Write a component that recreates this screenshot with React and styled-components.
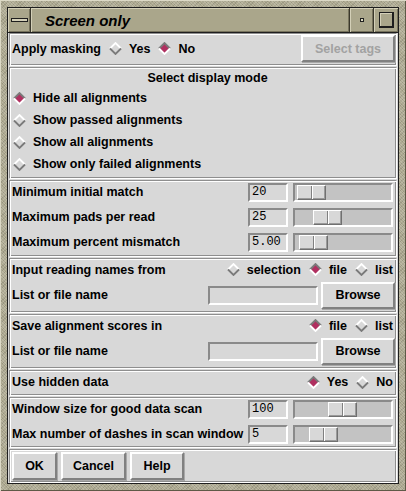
import React from 'react';
import styled, { createGlobalStyle } from 'styled-components';

const GlobalStyle = createGlobalStyle`
  html, body {
    margin: 0;
    padding: 0;
    background: #aba78e;
  }
  body {
    font-family: "Liberation Sans", Arial, sans-serif;
  }
`;

const Frame = styled.div`
  width: 406px;
  height: 491px;
  box-sizing: border-box;
  padding: 7px;
  display: flex;
  background-color: #aca88f;
  background-image: repeating-linear-gradient(45deg, rgba(255,255,255,0.18) 0 1px, transparent 1px 2px),
    repeating-linear-gradient(-45deg, rgba(0,0,0,0.10) 0 1px, transparent 1px 3px);
  box-shadow: inset 1px 1px 0 #dcd9c6, inset -1px -1px 0 #5e5a47;
`;

const Window = styled.div`
  flex: 1;
  display: flex;
  flex-direction: column;
  border: 1px solid #1e1e1e;
  background: #d8d8d8;
`;

const TitleBar = styled.div`
  height: 24px;
  flex: 0 0 auto;
  display: flex;
  border-bottom: 1px solid #1e1e1e;
  background: #aaa68b;
`;

const TitleCell = styled.div`
  width: ${p => (p.$w ? `${p.$w}px` : 'auto')};
  flex: ${p => (p.$w ? '0 0 auto' : '1')};
  display: flex;
  align-items: center;
  justify-content: ${p => (p.$w ? 'center' : 'flex-start')};
  box-sizing: border-box;
  padding-left: ${p => (p.$w ? 0 : 14)}px;
  border-right: ${p => (p.$last ? 'none' : '1px solid #3a382c')};
  box-shadow: inset 1px 1px 0 #d4d0b8, inset -1px -1px 0 #77735d;
`;

const TitleText = styled.span`
  font-size: 15px;
  font-weight: bold;
  font-style: italic;
  color: #000;
`;

const MenuGlyph = styled.div`
  width: 17px;
  height: 4px;
  box-sizing: border-box;
  border: 1px solid #1e1e1e;
  background: #d4d0b8;
`;

const MinGlyph = styled.div`
  width: 4px;
  height: 4px;
  box-sizing: border-box;
  border: 1px solid #1e1e1e;
  background: #e0dcc4;
`;

const MaxGlyph = styled.div`
  width: 15px;
  height: 16px;
  box-sizing: border-box;
  border: 1px solid #1e1e1e;
  border-right-width: 2px;
  border-bottom-width: 2px;
  box-shadow: inset 1px 1px 0 #d4d0b8;
`;

const Content = styled.div`
  flex: 1;
  display: flex;
  flex-direction: column;
  gap: 1px;
  padding: 0 1px;
`;

const Section = styled.div`
  height: ${p => (p.$h ? `${p.$h}px` : 'auto')};
  flex: ${p => (p.$h ? '0 0 auto' : '1')};
  box-sizing: border-box;
  display: flex;
  flex-direction: column;
  gap: ${p => p.$gap || 0}px;
  padding: ${p => p.$pt || 0}px 1px 0 2px;
  border: 1px solid;
  border-color: #8e8e8e #fff #fff #8e8e8e;
  box-shadow: inset 1px 1px 0 #fff, inset -1px -1px 0 #8e8e8e;
`;

const Row = styled.div`
  height: ${p => p.$h}px;
  flex: 0 0 auto;
  display: flex;
  align-items: center;
  justify-content: ${p => (p.$center ? 'center' : 'flex-start')};
  padding-left: ${p => (p.$center ? 8 : 0)}px;
  gap: ${p => p.$gap || 0}px;
`;

const Label = styled.span`
  font-size: 12.5px;
  font-weight: bold;
  color: #000;
  white-space: nowrap;
`;

const Spacer = styled.div`
  flex: 1;
`;

const RadioGroup = styled.div`
  display: flex;
  align-items: center;
  gap: 8px;
  margin-left: ${p => p.$ml || 0}px;
  margin-right: ${p => p.$mr || 0}px;
`;

const RadioItem = styled.label`
  display: inline-flex;
  align-items: center;
  gap: 7px;
  margin-left: ${p => p.$ml || 0}px;
`;

const Button = styled.button`
  width: ${p => p.$w}px;
  height: ${p => p.$hgt || 27}px;
  box-sizing: border-box;
  margin: 0 0 0 ${p => p.$ml || 0}px;
  padding: 0;
  border: 2px solid;
  border-color: #fff #808080 #808080 #fff;
  box-shadow: 1px 1px 0 #a8a8a8;
  background: #d8d8d8;
  font-family: "Liberation Sans", Arial, sans-serif;
  font-size: 12.5px;
  font-weight: bold;
  color: ${p => (p.disabled ? '#a2a2a2' : '#000')};
`;

const TextField = styled.div`
  width: ${p => p.$w}px;
  height: 19px;
  box-sizing: border-box;
  display: flex;
  align-items: center;
  padding-left: 2px;
  border: 2px solid;
  border-color: #8a8a8a #fff #fff #8a8a8a;
  background: #d8d8d8;
  font-family: "Liberation Mono", "DejaVu Sans Mono", monospace;
  font-size: 12px;
  color: #000;
`;

const Trough = styled.div`
  width: 100px;
  height: 19px;
  box-sizing: border-box;
  display: flex;
  align-items: center;
  margin: 0 2px 0 5px;
  border: 2px solid;
  border-color: #8a8a8a #fff #fff #8a8a8a;
  background: #c3c3c3;
`;

const Thumb = styled.div`
  position: relative;
  width: 29px;
  height: 15px;
  box-sizing: border-box;
  margin-left: ${p => p.$offset}px;
  border: 1px solid;
  border-color: #fff #707070 #707070 #fff;
  box-shadow: inset -1px -1px 0 #9a9a9a;
  background: #d8d8d8;

  &::after {
    content: '';
    position: absolute;
    left: 13px;
    top: 0;
    bottom: 0;
    width: 1px;
    background: #808080;
    box-shadow: 1px 0 0 #fff;
  }
`;

const Diamond = ({ on }) => (
  <svg width="13" height="13" viewBox="0 0 13 13">
    <polygon points="6.5,1.5 11.5,6.5 6.5,11.5 1.5,6.5" fill={on ? '#b03060' : '#d8d8d8'} />
    <polyline points="1,6.5 6.5,1 12,6.5" fill="none" stroke={on ? '#7a7a7a' : '#fff'} strokeWidth="1.8" />
    <polyline points="1,6.5 6.5,12 12,6.5" fill="none" stroke={on ? '#fff' : '#7a7a7a'} strokeWidth="1.8" />
  </svg>
);

const Radio = ({ on, children, ml }) => (
  <RadioItem $ml={ml}>
    <Diamond on={on} />
    <Label>{children}</Label>
  </RadioItem>
);

const ValueRow = ({ label, value, offset, h }) => (
  <Row $h={h}>
    <Label>{label}</Label>
    <Spacer />
    <TextField $w={40}>{value}</TextField>
    <Trough>
      <Thumb $offset={offset} />
    </Trough>
  </Row>
);

const FileRow = () => (
  <Row $h={30}>
    <Label>List or file name</Label>
    <Spacer />
    <TextField $w={110} />
    <Button $w={74} $ml={3}>Browse</Button>
  </Row>
);

const displayModes = [
  'Hide all alignments',
  'Show passed alignments',
  'Show all alignments',
  'Show only failed alignments',
];

export default function App() {
  return (
    <>
      <GlobalStyle />
      <Frame>
        <Window>
          <TitleBar>
            <TitleCell $w={23}><MenuGlyph /></TitleCell>
            <TitleCell><TitleText>Screen only</TitleText></TitleCell>
            <TitleCell $w={24}><MinGlyph /></TitleCell>
            <TitleCell $w={24} $last><MaxGlyph /></TitleCell>
          </TitleBar>

          <Content>
            <Section $h={33}>
              <Row $h={29}>
                <Label>Apply masking</Label>
                <RadioGroup $ml={8}>
                  <Radio>Yes</Radio>
                  <Radio on>No</Radio>
                </RadioGroup>
                <Spacer />
                <Button $w={94} disabled>Select tags</Button>
              </Row>
            </Section>

            <Section $h={112}>
              <Row $h={19} $center>
                <Label>Select display mode</Label>
              </Row>
              {displayModes.map((m, i) => (
                <Row key={m} $h={22}>
                  <Radio on={i === 0} ml={1}>{m}</Radio>
                </Row>
              ))}
            </Section>

            <Section $h={77} $gap={3}>
              <ValueRow h={22} label="Minimum initial match" value="20" offset={2} />
              <ValueRow h={22} label="Maximum pads per read" value="25" offset={18} />
              <ValueRow h={22} label="Maximum percent mismatch" value="5.00" offset={4} />
            </Section>

            <Section $h={55}>
              <Row $h={21}>
                <Label>Input reading names from</Label>
                <Spacer />
                <RadioGroup $mr={2}>
                  <Radio>selection</Radio>
                  <Radio on>file</Radio>
                  <Radio>list</Radio>
                </RadioGroup>
              </Row>
              <FileRow />
            </Section>

            <Section $h={55}>
              <Row $h={21}>
                <Label>Save alignment scores in</Label>
                <Spacer />
                <RadioGroup $mr={2}>
                  <Radio on>file</Radio>
                  <Radio>list</Radio>
                </RadioGroup>
              </Row>
              <FileRow />
            </Section>

            <Section $h={26}>
              <Row $h={22}>
                <Label>Use hidden data</Label>
                <Spacer />
                <RadioGroup $mr={2}>
                  <Radio on>Yes</Radio>
                  <Radio>No</Radio>
                </RadioGroup>
              </Row>
            </Section>

            <Section $h={51} $gap={3}>
              <ValueRow h={22} label="Window size for good data scan" value="100" offset={33} />
              <ValueRow h={22} label="Max number of dashes in scan window" value="5" offset={14} />
            </Section>

            <Section $pt={1}>
              <Row $h={30} $gap={4}>
                <Button $w={45} $hgt={28}>OK</Button>
                <Button $w={65} $hgt={28}>Cancel</Button>
                <Button $w={54} $hgt={28}>Help</Button>
              </Row>
            </Section>
          </Content>
        </Window>
      </Frame>
    </>
  );
}
